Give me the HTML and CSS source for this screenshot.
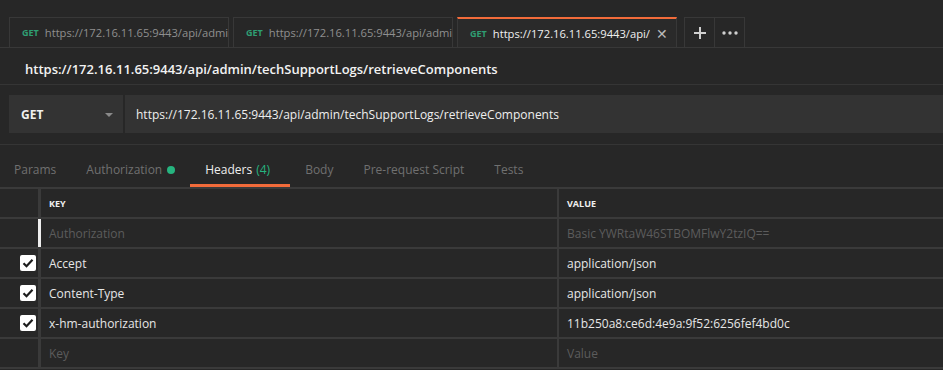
FILE: index.html
```html
<!DOCTYPE html>
<html>
<head>
    <meta charset="UTF-8">
    <title>Postman request</title>
    <link rel="stylesheet" href="styles.css">
</head>
<body>
<div class="tabbar">
    <div class="tab"><span class="verb">GET</span><span class="tab-url">https://172.16.11.65:9443/api/admin/techSupportLogs</span></div>
    <div class="tab"><span class="verb">GET</span><span class="tab-url">https://172.16.11.65:9443/api/admin/techSupportLogs</span></div>
    <div class="tab active"><span class="verb">GET</span><span class="tab-url">https://172.16.11.65:9443/api/admin/techSupportLogs</span><span class="close">&#x2715;</span></div>
    <div class="tab-btns">
        <div class="tab-btn">
            <svg width="14" height="14" viewBox="0 0 14 14"><path d="M7 1v12M1 7h12" stroke="#cfcfcf" stroke-width="2"/></svg>
        </div>
        <div class="tab-btn">
            <svg width="16" height="4" viewBox="0 0 16 4"><circle cx="2" cy="2" r="1.7" fill="#cfcfcf"/><circle cx="8" cy="2" r="1.7" fill="#cfcfcf"/><circle cx="14" cy="2" r="1.7" fill="#cfcfcf"/></svg>
        </div>
    </div>
</div>

<div class="title">https://172.16.11.65:9443/api/admin/techSupportLogs/retrieveComponents</div>

<div class="urlbar">
    <div class="method">GET<span class="caret"></span></div>
    <div class="url">https://172.16.11.65:9443/api/admin/techSupportLogs/retrieveComponents</div>
</div>

<div class="subtabs">
    <span class="subtab">Params</span>
    <span class="subtab">Authorization <i class="dot"></i></span>
    <span class="subtab current">Headers <em>(4)</em></span>
    <span class="subtab">Body</span>
    <span class="subtab">Pre-request Script</span>
    <span class="subtab">Tests</span>
</div>

<div class="table">
    <div class="row head">
        <div class="chk"></div>
        <div class="key">KEY</div>
        <div class="val">VALUE</div>
    </div>
    <div class="row">
        <div class="chk"></div>
        <div class="key dim cursor">Authorization</div>
        <div class="val dim">Basic YWRtaW46STBOMFlwY2tzIQ==</div>
    </div>
    <div class="row">
        <div class="chk"><span class="box"><svg width="12" height="10" viewBox="0 0 12 10"><path d="M1.5 5.2l3 3 6-6.5" fill="none" stroke="#1c1c1c" stroke-width="2.2"/></svg></span></div>
        <div class="key">Accept</div>
        <div class="val">application/json</div>
    </div>
    <div class="row">
        <div class="chk"><span class="box"><svg width="12" height="10" viewBox="0 0 12 10"><path d="M1.5 5.2l3 3 6-6.5" fill="none" stroke="#1c1c1c" stroke-width="2.2"/></svg></span></div>
        <div class="key">Content-Type</div>
        <div class="val">application/json</div>
    </div>
    <div class="row">
        <div class="chk"><span class="box"><svg width="12" height="10" viewBox="0 0 12 10"><path d="M1.5 5.2l3 3 6-6.5" fill="none" stroke="#1c1c1c" stroke-width="2.2"/></svg></span></div>
        <div class="key">x-hm-authorization</div>
        <div class="val">11b250a8:ce6d:4e9a:9f52:6256fef4bd0c</div>
    </div>
    <div class="row">
        <div class="chk"></div>
        <div class="key dim">Key</div>
        <div class="val dim">Value</div>
    </div>
</div>
</body>
</html>
```

FILE: styles.css
```css
body {
    margin: 0;
    background: #272727;
    color: #e6e6e6;
    font-family: "Open Sans", "Liberation Sans", sans-serif;
    font-size: 12px;
    overflow: hidden;
    height: 370px;
}

/* tabs on top */
.tabbar {
    display: flex;
    align-items: flex-end;
    height: 48px;
    padding-left: 9px;
    border-bottom: 1px solid #383838;
    box-sizing: border-box;
    gap: 4px;
}

.tab {
    display: flex;
    align-items: center;
    width: 220px;
    height: 30px;
    padding-left: 12px;
    box-sizing: border-box;
    border: 1px solid #383838;
    border-bottom: none;
    white-space: nowrap;
    overflow: hidden;
    color: #8f8f8f;
    font-size: 11.2px;
}

.tab.active {
    border-top: 2px solid #f26b3a;
    background: #2a2a2a;
    color: #f0f0f0;
    padding-right: 8px;
}

.verb {
    color: #2f9e73;
    font-size: 9px;
    font-weight: 700;
    margin-right: 6px;
    flex: none;
}

.tab-url {
    overflow: hidden;
    flex: 1;
}

.close {
    flex: none;
    color: #b8b8b8;
    font-size: 14px;
    margin-left: 6px;
}

.tab-btns {
    display: flex;
    margin-left: 3px;
    border: 1px solid #383838;
    border-bottom: none;
}

.tab-btn {
    width: 29px;
    height: 29px;
    display: flex;
    align-items: center;
    justify-content: center;
}

.tab-btn + .tab-btn {
    border-left: 1px solid #383838;
}

/* request title */
.title {
    height: 36px;
    line-height: 42px;
    padding-left: 25px;
    font-size: 13px;
    font-weight: 600;
    color: #f2f2f2;
    border-bottom: 1px solid #353535;
}

/* url bar */
.urlbar {
    display: flex;
    height: 38px;
    margin: 10px 0 11px 9px;
    gap: 2px;
}

.method {
    width: 114px;
    background: #333333;
    display: flex;
    align-items: center;
    padding-left: 12px;
    box-sizing: border-box;
    font-weight: 700;
    font-size: 12px;
    color: #f0f0f0;
    position: relative;
}

.caret {
    position: absolute;
    left: 96px;
    top: 18px;
    border-left: 4px solid transparent;
    border-right: 4px solid transparent;
    border-top: 4px solid #8a8a8a;
}

.url {
    flex: 1;
    background: #333333;
    display: flex;
    align-items: center;
    padding-left: 11px;
    color: #eeeeee;
    white-space: nowrap;
}

/* request sub tabs */
.subtabs {
    display: flex;
    height: 43px;
    border-top: 1px solid #353535;
    padding: 7px 0 0 14px;
    box-sizing: border-box;
}

.subtab {
    display: flex;
    align-items: center;
    color: #707070;
    font-size: 12px;
    margin-right: 30px;
}

.subtab.current {
    color: #eeeeee;
    border-bottom: 3px solid #f26b3a;
    padding: 3px 20px 0 15px;
    margin: 0 15px 0 -15px;
}

.subtab em {
    font-style: normal;
    color: #26b47f;
    margin-left: 4px;
}

.dot {
    width: 8px;
    height: 8px;
    border-radius: 50%;
    background: #26b47f;
    margin-left: 5px;
}

/* headers table */
.table {
    border-top: 2px solid #3a3a3a;
}

.row {
    display: grid;
    grid-template-columns: 38px 519px 1fr;
    height: 28px;
    border-bottom: 2px solid #3a3a3a;
}

.chk {
    display: flex;
    align-items: center;
    justify-content: flex-end;
    padding-right: 2px;
}

.key, .val {
    display: flex;
    align-items: center;
    padding-left: 8px;
    border-left: 3px solid #3a3a3a;
    white-space: nowrap;
}

.val {
    border-left-width: 2px;
}

.head .key, .head .val {
    font-size: 9px;
    font-weight: 700;
    color: #f0f0f0;
}

.dim {
    color: #5c5c5c;
}

.cursor {
    border-left-color: #ededed;
}

.box {
    width: 16px;
    height: 16px;
    background: #ffffff;
    border-radius: 2px;
    display: flex;
    align-items: center;
    justify-content: center;
}
```
